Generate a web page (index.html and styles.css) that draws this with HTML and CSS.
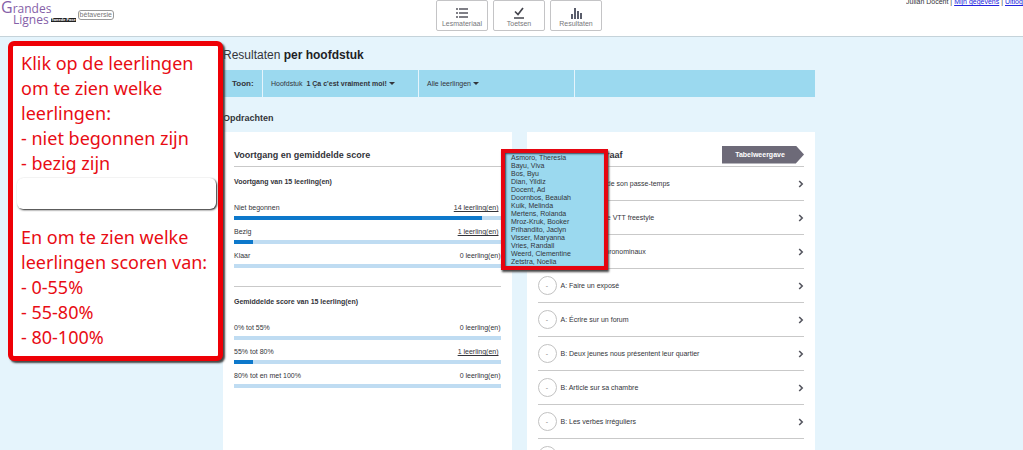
FILE: index.html
```html
<!DOCTYPE html>
<html lang="nl">
<head>
<meta charset="utf-8">
<title>Grandes Lignes – Resultaten</title>
<link rel="stylesheet" href="styles.css">
</head>
<body>
<header class="topbar">
  <a class="brand" href="#">
    <span class="logo"><span class="logo-line"><span class="logo-cap">G</span>randes</span><span class="logo-line logo-second">Lignes</span></span>
    <span class="edition">Tweede Fase</span>
    <span class="beta">bètaversie</span>
  </a>
  <nav class="tabs">
    <a class="tab" href="#">
      <svg width="14" height="12" viewBox="0 0 14 12" fill="none" stroke="#55565f" stroke-width="1.5"><path d="M1 2h2M4 2h9M1 6h2M4 6h9M1 10h2M4 10h9"/></svg>
      <span>Lesmateriaal</span>
    </a>
    <a class="tab" href="#">
      <svg width="14" height="12" viewBox="0 0 14 12" fill="none" stroke="#44454d" stroke-width="1.7"><path d="M3 4.5l3 3L11 1M2 11h10"/></svg>
      <span>Toetsen</span>
    </a>
    <a class="tab" href="#">
      <svg width="14" height="12" viewBox="0 0 14 12" fill="none" stroke="#5a5d6b" stroke-width="2"><path d="M3 12V7M6 12V1M9 12V4M12 12V6"/></svg>
      <span>Resultaten</span>
    </a>
  </nav>
  <div class="account">Julian Docent | <a href="#">Mijn gegevens</a> | <a href="#">Uitloggen</a></div>
</header>

<main class="page">
  <h1 class="page-title">Resultaten <b>per hoofdstuk</b></h1>
  <div class="filters">
    <span class="filter-label">Toon:</span>
    <button class="filter" type="button">Hoofdstuk <b>1 Ça c'est vraiment moi!</b><span class="caret"></span></button>
    <button class="filter" type="button">Alle leerlingen<span class="caret"></span></button>
  </div>
  <h2 class="section-title">Opdrachten</h2>
  <div class="cards">
    <section class="card">
      <div class="card-head"><h3 class="card-title">Voortgang en gemiddelde score</h3></div>
      <div class="group">
        <h4 class="group-title">Voortgang van 15 leerling(en)</h4>
        <div class="stat"><span>Niet begonnen</span><a class="count" href="#">14 leerling(en)</a><div class="bar"><div class="fill" style="width:93%"></div></div></div>
        <div class="stat"><span>Bezig</span><a class="count" href="#">1 leerling(en)</a><div class="bar"><div class="fill" style="width:7%"></div></div></div>
        <div class="stat"><span>Klaar</span><span>0 leerling(en)</span><div class="bar"></div></div>
      </div>
      <div class="group">
        <h4 class="group-title">Gemiddelde score van 15 leerling(en)</h4>
        <div class="stat"><span>0% tot 55%</span><span>0 leerling(en)</span><div class="bar"></div></div>
        <div class="stat"><span>55% tot 80%</span><a class="count" href="#">1 leerling(en)</a><div class="bar"><div class="fill" style="width:7%"></div></div></div>
        <div class="stat"><span>80% tot en met 100%</span><span>0 leerling(en)</span><div class="bar"></div></div>
      </div>
    </section>
    <section class="card">
      <div class="card-head"><h3 class="card-title">Score per paragraaf</h3><button class="table-view" type="button">Tabelweergave</button></div>
      <ul class="tasks">
        <li><a class="task" href="#"><span class="score">-</span><span>A: Claire parle de son passe-temps</span><svg class="chevron" width="6" height="8" viewBox="0 0 6 8"><path d="M1.2 1l3 3-3 3"/></svg></a></li>
        <li><a class="task" href="#"><span class="score">-</span><span>A: Champion de VTT freestyle</span><svg class="chevron" width="6" height="8" viewBox="0 0 6 8"><path d="M1.2 1l3 3-3 3"/></svg></a></li>
        <li><a class="task" href="#"><span class="score">-</span><span>A: Les verbes pronominaux</span><svg class="chevron" width="6" height="8" viewBox="0 0 6 8"><path d="M1.2 1l3 3-3 3"/></svg></a></li>
        <li><a class="task" href="#"><span class="score">-</span><span>A: Faire un exposé</span><svg class="chevron" width="6" height="8" viewBox="0 0 6 8"><path d="M1.2 1l3 3-3 3"/></svg></a></li>
        <li><a class="task" href="#"><span class="score">-</span><span>A: Écrire sur un forum</span><svg class="chevron" width="6" height="8" viewBox="0 0 6 8"><path d="M1.2 1l3 3-3 3"/></svg></a></li>
        <li><a class="task" href="#"><span class="score">-</span><span>B: Deux jeunes nous présentent leur quartier</span><svg class="chevron" width="6" height="8" viewBox="0 0 6 8"><path d="M1.2 1l3 3-3 3"/></svg></a></li>
        <li><a class="task" href="#"><span class="score">-</span><span>B: Article sur sa chambre</span><svg class="chevron" width="6" height="8" viewBox="0 0 6 8"><path d="M1.2 1l3 3-3 3"/></svg></a></li>
        <li><a class="task" href="#"><span class="score">-</span><span>B: Les verbes irréguliers</span><svg class="chevron" width="6" height="8" viewBox="0 0 6 8"><path d="M1.2 1l3 3-3 3"/></svg></a></li>
        <li><a class="task" href="#"><span class="score"></span></a></li>
      </ul>
    </section>
    <ul class="students">
      <li>Asmoro, Theresia</li>
      <li>Bayu, Viva</li>
      <li>Bos, Byu</li>
      <li>Dian, Yildiz</li>
      <li>Docent, Ad</li>
      <li>Doornbos, Beaulah</li>
      <li>Kuik, Melinda</li>
      <li>Mertens, Rolanda</li>
      <li>Mroz-Kruk, Booker</li>
      <li>Prihandito, Jaclyn</li>
      <li>Visser, Maryanna</li>
      <li>Vries, Randall</li>
      <li>Weerd, Clementine</li>
      <li>Zetstra, Noelia</li>
    </ul>
  </div>
  <aside class="note">
    <p>Klik op de leerlingen<br>om te zien welke<br>leerlingen:<br>- niet begonnen zijn<br>- bezig zijn</p>
    <div class="note-blank"></div>
    <p>En om te zien welke<br>leerlingen scoren van:<br>- 0-55%<br>- 55-80%<br>- 80-100%</p>
  </aside>
</main>
</body>
</html>
```

FILE: styles.css
```css
* { box-sizing: border-box; }

html, body { height: 100%; }

body {
  display: flex;
  flex-direction: column;
  margin: 0;
  overflow: hidden;
  background: #e5f4fc;
  color: #33343a;
  font: 7px/10px "Liberation Sans", Arial, sans-serif;
}

h1, h2, h3, h4, p, ul { margin: 0; padding: 0; font-weight: normal; }
ul { list-style: none; }
a { color: inherit; }
svg { display: block; }
button { border: 0; margin: 0; font: inherit; color: inherit; }

/* Top bar */
.topbar {
  display: grid;
  grid-template-columns: 1fr auto 1fr;
  flex: none;
  height: 37px;
  padding-left: 1px;
  background: #fff;
  border-bottom: 1px solid #c5d3da;
}

.brand { display: flex; align-items: flex-start; text-decoration: none; }
.logo {
  display: flex;
  flex-direction: column;
  flex: none;
  width: 50px;
  color: #8560a8;
  font: 500 12px/11px "Open Sans", sans-serif;
  padding-top: 2px;
}
.logo-line { white-space: nowrap; }
.logo-cap { font-size: 16px; font-weight: normal; }
.logo-second { padding-left: 12px; }
.edition {
  margin: 18px 2px 0 0;
  background: #222;
  color: #fff;
  font-size: 4px;
  line-height: 4px;
  font-weight: bold;
}
.beta {
  margin-top: 10px;
  padding: 0 1px;
  border: 1px solid #999;
  border-radius: 3px;
  color: #777;
  line-height: 8px;
}

.tabs { display: flex; gap: 5px; padding-left: 14px; }
.tab {
  display: flex;
  flex-direction: column;
  align-items: center;
  width: 52px;
  height: 31px;
  padding-top: 6px;
  border: 1px solid #c4c4c6;
  border-radius: 2px;
  color: #77777b;
  text-decoration: none;
}

.account {
  justify-self: end;
  width: 117px;
  height: 9px;
  margin-top: -3px;
  overflow: hidden;
  white-space: nowrap;
}
.account a { color: #2222dd; }

/* Page */
.page {
  position: relative;
  display: flex;
  flex-direction: column;
  flex: auto;
  min-height: 0;
  align-items: center;
  padding: 10px 0 0 15px;
}
.page > .page-title,
.page > .filters,
.page > .section-title,
.page > .cards { width: 592px; max-width: 100%; }

.page-title { font-size: 12px; line-height: 16px; }
.page-title b { color: #1e1f26; }

.filters {
  display: flex;
  flex: none;
  height: 27px;
  margin-top: 7px;
  background: #9bd9ef;
}
.filter-label {
  display: flex;
  align-items: center;
  width: 40px;
  padding-left: 9px;
  border-right: 1px solid #e5f4fc;
  font-size: 8px;
  font-weight: bold;
}
.filter {
  display: flex;
  align-items: center;
  gap: 2px;
  width: 156px;
  padding: 0 8px;
  border-right: 1px solid #e5f4fc;
  background: none;
  white-space: pre;
}
.caret {
  border: 3px solid transparent;
  border-top-color: #33343a;
  border-bottom: 0;
}

.section-title {
  margin: 16px 0 9px;
  font-size: 9px;
  font-weight: bold;
}

/* Cards */
.cards {
  position: relative;
  display: grid;
  grid-template-columns: 1fr 1fr;
  gap: 15px;
  flex: auto;
}
.card { padding: 11px; background: #fff; }
.card-head {
  display: flex;
  align-items: center;
  justify-content: space-between;
  height: 24px;
  border-bottom: 1px solid #c9c9c9;
}
.card-title { font-size: 9px; font-weight: bold; }

.group { padding: 10px 0 11px; }
.group + .group { border-top: 1px solid #c9c9c9; }
.group-title { margin-bottom: 16px; font-weight: bold; }
.stat {
  display: flex;
  flex-wrap: wrap;
  justify-content: space-between;
  row-gap: 3px;
  margin-bottom: 7px;
}
.count { margin-right: 2px; }
.bar { width: 100%; height: 4px; background: #bfdcf2; }
.fill { height: 4px; background: #0d78cb; }

.table-view {
  width: 82px;
  height: 18px;
  padding: 0 8px 0 2px;
  background: #6d6a78;
  clip-path: polygon(0 0, 90% 0, 100% 50%, 90% 100%, 0 100%);
  color: #fff;
  font-weight: bold;
}

.task {
  display: flex;
  align-items: center;
  gap: 4px;
  height: 34px;
  border-bottom: 1px solid #c9c9c9;
  text-decoration: none;
}
.score {
  display: flex;
  align-items: center;
  justify-content: center;
  width: 19px;
  height: 19px;
  border: 1px solid #c2c2c2;
  border-radius: 50%;
  color: #888;
}
.chevron {
  margin-left: auto;
  fill: none;
  stroke: #55565f;
  stroke-width: 1.6;
}

/* Floating list of students */
.students {
  position: absolute;
  top: 17px;
  left: 278px;
  width: 107px;
  padding: 1px 6px 0;
  border: 4px solid #e60510;
  background: #9bd9ef;
  box-shadow: 1px 2px 2px #444, inset 1px 1px 2px #345;
  line-height: 8px;
}

/* Instruction note */
.note {
  position: absolute;
  top: 4px;
  left: 8px;
  width: 215px;
  padding: 5px 2px 6px 8px;
  border: 5px solid #ee0006;
  border-radius: 6px;
  background: #fff;
  box-shadow: 2px 2px 2px #444;
  color: #e80c14;
  font: 18px/25px "Noto Sans", sans-serif;
}
.note p { white-space: nowrap; }
.note-blank {
  height: 31px;
  margin: 2px 0 16px -4px;
  border-radius: 6px;
  background: #fff;
  box-shadow: 1px 1px 2px #222;
}
```
